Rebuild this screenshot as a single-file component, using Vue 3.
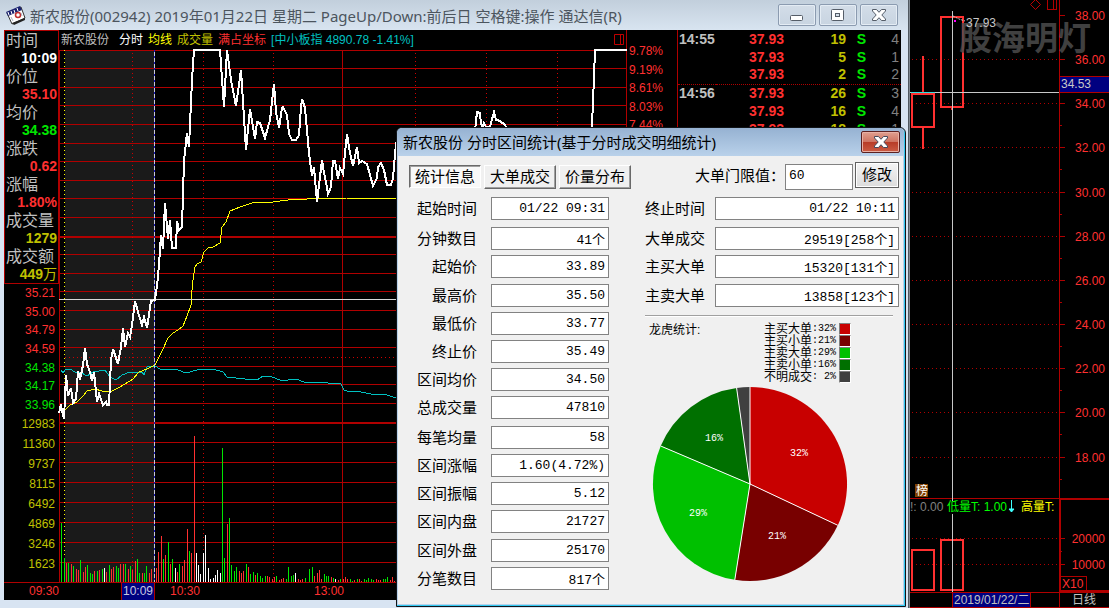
<script setup>
const info = [
  { label: '时间', value: '10:09', tone: 'white' },
  { label: '价位', value: '35.10', tone: 'red' },
  { label: '均价', value: '34.38', tone: 'green' },
  { label: '涨跌', value: '0.62', tone: 'red' },
  { label: '涨幅', value: '1.80%', tone: 'red' },
  { label: '成交量', value: '1279', tone: 'yellow' },
  { label: '成交额', value: '449', unit: '万', tone: 'yellow' }
]
const priceAxis = [
  ['35.21', 'red'], ['35.00', 'red'], ['34.79', 'red'], ['34.59', 'red'],
  ['34.38', 'green'], ['34.17', 'green'], ['33.96', 'green']
]
const volumeAxis = ['12983', '11360', '9737', '8115', '6492', '4869', '3246', '1623']
const percentAxis = ['9.78%', '9.19%', '8.61%', '8.03%', '7.44%']

const ticks = [
  ['14:55', '37.93', 19, 4], ['', '37.93', 5, 1], ['', '37.93', 2, 2],
  ['14:56', '37.93', 26, 3], ['', '37.93', 16, 4], ['', '37.93', 18, 1]
]

const gridY = [50, 68, 87, 105, 124, 143, 161, 180, 198, 217, 254, 273, 291, 310, 329, 347, 366, 384, 403, 442, 462, 482, 502, 522, 542, 562]
const dottedX = [132, 203, 273, 415, 486, 557]

const pricePath = '59,413 61,404 62,411 64,419 66,375 68,396 71,388 73,403 76,399 78,371 80,380 83,365 85,348 87,364 90,372 92,381 94,372 97,402 99,394 103,405 106,402 107,405 109,405 111,360 113,349 118,364 121,347 123,328 125,347 128,333 130,337 132,325 135,301 138,312 142,325 144,317 147,328 149,315 151,301 155,300 157,286 159,265 161,235 163,249 165,203 168,239 170,220 172,248 176,248 177,221 179,230 182,227 184,161 186,142 187,133 189,147 192,80 194,50 220,50 224,107 227,50 231,80 236,106 241,70 246,150 250,109 255,139 257,122 260,123 265,138 270,120 274,84 276,112 279,128 282,108 283,107 287,115 289,134 292,140 296,140 299,135 301,107 302,99 305,108 309,153 312,176 314,167 317,202 322,160 324,173 326,182 328,194 331,187 333,161 335,161 338,179 340,168 343,174 345,153 347,134 350,153 353,166 357,147 359,163 362,161 367,164 370,175 373,186 377,178 378,167 381,163 384,170 387,185 391,185 393,178 396,143 410,150 430,138 450,150 474,140 477,112 480,113 481,124 483,127 484,123 486,127 490,127 494,112 496,120 498,120 504,124 515,140 560,150 588,145 592,126 594,77 595,50 627,50'
const averagePath = '64,411 70,405 77,402 83,396 87,391 95,389 102,391 110,392 118,388 125,384 133,379 139,372 147,369 155,365 158,359 163,349 168,338 173,333 178,330 183,326 187,316 191,305 192,290 193,280 195,267 197,264 201,262 204,252 208,248 213,247 220,243 222,227 226,222 230,211 240,207 252,203 273,202 288,200 307,199 347,198 396,198'
const indexPath = '61,370 63,373 66,369 70,369 75,372 80,372 87,376 93,372 105,370 110,377 116,380 122,375 130,372 142,372 144,375 147,367 155,366 160,369 168,369 178,370 186,373 197,370 213,369 223,372 227,377 245,379 257,380 263,376 272,377 280,380 288,380 296,379 304,382 316,382 328,383 341,384 344,390 350,392 356,391 366,393 376,395 384,394 396,398'

// x, top, colour key — bars stand on the time axis
const volumeBars = 'g61,523 g64,558 r66,563 g68,563 r71,564 g73,566 r76,569 r78,570 g80,560 r83,572 r85,567 g87,565 g90,573 g92,574 r94,571 g97,571 r99,570 g102,569 w104,568 r106,572 g109,565 r111,569 r113,567 g116,566 g118,568 r120,564 r123,564 g125,564 r128,569 g130,566 r132,570 r135,561 g137,559 g139,573 r142,573 g144,573 g146,566 r149,573 r151,569 m154,565 r156,568 r158,552 r161,536 g163,559 r165,555 g168,542 r170,564 g172,559 w175,568 r177,572 g179,564 r182,566 r184,560 r187,529 g189,551 r191,553 r194,436 w196,553 w198,565 w200,574 w203,553 w205,535 w208,568 w210,579 w213,578 w215,575 w217,570 w220,573 g222,448 g224,558 r227,524 g229,518 g231,565 g234,571 g236,567 r239,571 r241,573 r243,571 g246,564 r248,567 g250,574 g253,572 r255,575 g257,573 g260,576 g262,578 g265,576 r267,576 r269,577 r272,579 r274,577 g276,576 r279,580 r281,579 r283,578 g286,579 g288,567 g291,576 g293,575 w295,573 r298,579 r300,580 r302,579 g305,578 g309,569 g312,567 r314,576 r317,573 r319,570 r321,579 g324,574 g326,576 g328,576 r331,577 g333,578 w335,579 r338,580 g340,579 r343,579 r345,577 r347,579 g350,579 g352,581 r354,580 g357,579 r359,579 r361,581 g364,579 g366,580 g368,578 g371,579 g373,580 r376,579 r378,580 r380,580 g383,579 g385,579 g387,577 r390,580 r392,577 r394,581'
  .split(' ').map(s => {
    const [x, y] = s.slice(1).split(',').map(Number)
    return { x, y, tone: s[0] }
  })

const leftRows = [
  ['起始时间', '01/22 09:31'], ['分钟数目', '41个'], ['起始价', '33.89'], ['最高价', '35.50'],
  ['最低价', '33.77'], ['终止价', '35.49'], ['区间均价', '34.50'], ['总成交量', '47810'],
  ['每笔均量', '58'], ['区间涨幅', '1.60(4.72%)'], ['区间振幅', '5.12'], ['区间内盘', '21727'],
  ['区间外盘', '25170'], ['分笔数目', '817个']
]
const rightRows = [
  ['终止时间', '01/22 10:11'], ['大单成交', '29519[258个]'], ['主买大单', '15320[131个]'], ['主卖大单', '13858[123个]']
]
const legend = [
  { name: '主买大单', pct: ':32%', color: '#c80000' },
  { name: '主买小单', pct: ':21%', color: '#780000' },
  { name: '主卖大单', pct: ':29%', color: '#00c000' },
  { name: '主卖小单', pct: ':16%', color: '#007000' },
  { name: '不明成交', pct: ': 2%', color: '#404040' }
]
const stops = [0, 0.32, 0.525, 0.814, 0.978, 1]
const at = f => {
  const a = f * 2 * Math.PI
  return `${(98 + 97 * Math.sin(a)).toFixed(1)} ${(98 - 97 * Math.cos(a)).toFixed(1)}`
}
const slices = legend.map((l, i) => ({
  color: l.color,
  d: `M98 98L${at(stops[i])}A97 97 0 0 1 ${at(stops[i + 1])}Z`
}))
const sliceLabels = [
  { x: 147, y: 70, t: '32%' }, { x: 125, y: 153, t: '21%' },
  { x: 46, y: 130, t: '29%' }, { x: 62, y: 55, t: '16%' }
]

const kAxis = [38, 36, 34, 32, 30, 28, 26, 24, 22, 20, 18].map((v, i) => ({
  t: v + '.00',
  y: Math.round(16 + i * 44.15) - 0.5
}))
</script>

<template>
  <div class="desk">
    <section class="window">
      <header class="caption">
        <svg class="app-icon" width="22" height="20" viewBox="0 0 22 20">
          <path d="M2 8L16 2L20 13L7 19Z" fill="#fff" stroke="#333" />
          <path d="M1 7L15 1L17 5L3 11Z" fill="#1c2470" />
          <path d="M3 7l1 3M6 6l1 3M9 5l1 3M12 3l1 3" stroke="#fff" />
          <path d="M7 18L20 13L20 15L9 20Z" fill="#222" />
          <circle cx="13" cy="10" r="2.5" fill="none" stroke="#c03030" stroke-width="1.5" />
          <path d="M6 12l2 4M16 8l1 3" stroke="#a9aec0" />
        </svg>
        <h1>新农股份(002942) 2019年01月22日 星期二 PageUp/Down:前后日 空格键:操作 通达信(R)</h1>
        <div class="caption-buttons">
          <button type="button" aria-label="最小化">
            <svg width="14" height="14" viewBox="0 0 14 14"><rect x="0.5" y="7.5" width="12" height="5" rx="1" fill="#fff" stroke="#555d68" /></svg>
          </button>
          <button type="button" aria-label="最大化">
            <svg width="14" height="14" viewBox="0 0 14 14"><rect x="0.5" y="1.5" width="12" height="11" rx="1" fill="#fff" stroke="#555d68" /><rect x="4.5" y="5.5" width="4" height="3" fill="#d4dfea" stroke="#555d68" /></svg>
          </button>
          <button type="button" aria-label="关闭">
            <svg width="14" height="14" viewBox="0 0 14 14"><path d="M.5 1.5h4L7 4.300L9.500 1.500h4v1.500L9.800 7L13.500 11v1.500h-4L7 9.700L4.500 12.500h-4V11L4.200 7L.5 3Z" fill="#fff" stroke="#555d68" /></svg>
          </button>
        </div>
      </header>

      <div class="content">
        <div class="side">
          <dl class="info">
            <div v-for="i in info" :key="i.label">
              <dt>{{ i.label }}</dt>
              <dd :class="i.tone">{{ i.value }}<span v-if="i.unit">{{ i.unit }}</span></dd>
            </div>
          </dl>
          <ul class="axis price-axis"><li v-for="p in priceAxis" :key="p[0]" :class="p[1]">{{ p[0] }}</li></ul>
          <ul class="axis volume-axis"><li v-for="v in volumeAxis" :key="v" class="yellow">{{ v }}</li></ul>
        </div>

        <div class="chart">
          <div class="chart-head">
            <span>新农股份</span><span class="name white">分时</span><span class="bright">均线</span><span class="yellow">成交量</span><span class="red">满占坐标</span><span class="cyan">[中小板指 4890.78 -1.41%]</span>
            <svg class="pane-icon" width="11" height="12" viewBox="0 0 11 12"><path d="M.5.5h9v10h-9zM6.5.5v10" fill="none" stroke="#c00000" /></svg>
          </div>
          <svg class="plot" viewBox="59 50 568 532" preserveAspectRatio="none">
            <rect x="65" y="50" width="90" height="532" fill="#1a1a1a" />
            <g class="crisp" stroke="#b00000" fill="none">
              <path v-for="y in gridY" :key="y" :d="`M59 ${y + 0.5}H627`" />
              <path d="M59 237H627M59 423H627" stroke-width="2" />
              <path v-for="x in dottedX" :key="'x' + x" :d="`M${x + 0.5} 53V582`" stroke="#d00000" stroke-dasharray="1 3" />
              <path d="M65 357.5H627" stroke="#d00000" stroke-dasharray="1 3" />
              <path d="M59.5 50V582M342.5 50V582M626.5 30V582" />
            </g>
            <path class="crisp" d="M64.5 50V582" stroke="#ffff00" stroke-dasharray="1 3" />
            <g class="crisp">
              <rect v-for="b in volumeBars" :key="b.x" :x="b.x" :y="b.y" width="1" :height="582 - b.y" :class="'bar-' + b.tone" />
            </g>
            <g class="crisp" fill="none">
              <polyline :points="indexPath" stroke="#00c0c0" />
              <polyline :points="averagePath" stroke="#ffff00" />
              <path d="M59 299.5H627" stroke="#d8d8d8" />
              <path d="M154.5 50V582" stroke="#c8c8d8" />
              <path d="M154.5 50V582" stroke="#1818c0" stroke-dasharray="2 4" />
              <polyline :points="pricePath" stroke="#ffffff" stroke-width="2" />
            </g>
          </svg>
        </div>

        <ul class="percent"><li v-for="p in percentAxis" :key="p">{{ p }}</li></ul>

        <div class="deals">
          <table>
            <tbody>
              <tr v-for="(t, i) in ticks" :key="i" :class="{ minute: i === 3 }">
                <td class="time">{{ t[0] }}</td>
                <td class="price">{{ t[1] }}</td>
                <td class="vol">{{ t[2] }}</td>
                <td class="side-flag">S</td>
                <td class="count">{{ t[3] }}</td>
              </tr>
            </tbody>
          </table>
        </div>

        <div class="times">
          <span>09:30</span><span class="cursor-cell"><b>10:09</b></span><span>10:30</span><span>13:00</span>
        </div>
      </div>
    </section>

    <aside class="kline">
      <svg class="kchart" viewBox="910 0 199 592" preserveAspectRatio="xMaxYMin slice">
        <g class="crisp" stroke="#b00000" fill="none">
          <path v-for="k in kAxis.slice(1)" :key="k.t" :d="`M912 ${k.y}H1059`" stroke-dasharray="1 3" />
          <path d="M912 538.5H1059M912 564.5H1059" stroke-dasharray="1 3" />
          <path v-for="k in kAxis" :key="'t' + k.t" :d="`M1059 ${k.y}h6M1059 ${k.y + 22}h3`" />
          <path d="M1059.5 0V499M910 498.5H1060M1059 538.5h6M1059 551.5h3M1059 564.5h6" />
          <path d="M1109 499H1060V591H1109" stroke-width="2" />
          <path d="M1061 576.5h25V591" />
          <path d="M1047.5 -.5h9v10h-9zM1053.5 0v9" />
        </g>
        <path d="M1035.5 -.5l5 5l-5 5l-5 -5z" stroke="#c00000" fill="none" />
        <g stroke="#ff3030" stroke-width="2" fill="none">
          <path d="M912 94H934V127H912ZM923 56V93M923 128V149M941 17H963V107H941ZM952 107V110M912 550H934V590H912ZM941 540H963V590H941Z" />
        </g>
        <text x="959" y="50" class="wm">股海明灯</text>
        <path d="M952.5 11V592M910 92.5H1059" stroke="#c8c8c8" fill="none" />
        <path d="M911 92.5H935" stroke="#30e0e0" />
        <path d="M953 16l6 3l6 2" stroke="#c8c8c8" stroke-dasharray="2 1" fill="none" />
        <rect x="954" y="20" width="2" height="2" fill="#ff00ff" />
        <text x="966" y="27" class="t-light">37.93</text>
        <g class="t-red">
          <text v-for="k in kAxis" :key="'l' + k.t" x="1105" :y="k.y + 4.5" text-anchor="end">{{ k.t }}</text>
          <text x="1105" y="543" text-anchor="end">20000</text>
          <text x="1105" y="569" text-anchor="end">10000</text>
          <text x="1062" y="588">X10</text>
        </g>
        <rect x="1060" y="77" width="49" height="15" fill="#000080" />
        <path d="M1060 76.5H1109M1060 92.5H1109" stroke="#b00000" />
        <text x="1061" y="88" class="t-light">34.53</text>
        <rect x="915" y="484" width="13" height="13" fill="#804000" />
        <text x="916" y="495" class="t-white">榜</text>
        <rect x="947" y="501" width="22" height="13" fill="#000" />
        <text x="910" y="511" class="t-dim">!: 0.00</text>
        <text x="947" y="511" class="t-green">低量T: 1.00</text>
        <path d="M1011.5 500v12M1009 509l2.5 3l2.5 -3z" stroke="#40ffff" fill="#40ffff" />
        <text x="1021" y="511" class="t-yellow">高量T:</text>
      </svg>
      <footer class="kfoot"><span class="date">2019/01/22/二</span><span class="period">日线</span></footer>
    </aside>

    <section class="dialog" role="dialog" aria-label="分时区间统计">
      <header class="dialog-title">
        <h2>新农股份 分时区间统计(基于分时成交明细统计)</h2>
        <button type="button" class="close" aria-label="关闭">
          <svg width="14" height="14" viewBox="0 0 14 14"><path d="M.5 1.5h4L7 4.300L9.500 1.500h4v1.500L9.800 7L13.500 11v1.500h-4L7 9.700L4.500 12.500h-4V11L4.200 7L.5 3Z" fill="#fff" stroke="#444a5c" /></svg>
        </button>
      </header>
      <div class="dialog-body">
        <div class="toolbar">
          <div class="tabs">
            <button type="button" class="active">统计信息</button>
            <button type="button">大单成交</button>
            <button type="button">价量分布</button>
          </div>
          <label for="limit">大单门限值：</label>
          <input id="limit" class="limit" value="60">
          <button type="button" class="modify">修改</button>
        </div>
        <div class="columns">
          <div class="rows left">
            <div v-for="(r, i) in leftRows" :key="r[0]" class="row">
              <label :for="'l' + i">{{ r[0] }}</label>
              <input :id="'l' + i" :value="r[1]" readonly>
            </div>
          </div>
          <div class="right">
            <div class="rows">
              <div v-for="(r, i) in rightRows" :key="r[0]" class="row">
                <label :for="'r' + i">{{ r[0] }}</label>
                <input :id="'r' + i" :value="r[1]" readonly>
              </div>
            </div>
            <hr>
            <div class="breakdown">
              <span>龙虎统计:</span>
              <ul class="legend">
                <li v-for="l in legend" :key="l.name">{{ l.name }}<span class="num">{{ l.pct }}</span><i :style="{ background: l.color }"></i></li>
              </ul>
            </div>
            <svg class="pie" width="196" height="196" viewBox="0 0 196 196">
              <path v-for="s in slices" :key="s.d" :d="s.d" :fill="s.color" />
              <path v-for="f in stops.slice(0, 5)" :key="f" :d="`M98 98L${at(f)}`" stroke="#fff" />
              <text v-for="l in sliceLabels" :key="l.t" :x="l.x" :y="l.y" text-anchor="middle">{{ l.t }}</text>
            </svg>
          </div>
        </div>
      </div>
    </section>
  </div>
</template>

<style>
body {
  background: #000;
}
</style>

<style scoped>
* {
  box-sizing: border-box;
}
.desk {
  position: relative;
  display: flex;
  height: 100vh;
  overflow: hidden;
  font: 12px/18px "Liberation Sans", "Noto Sans CJK SC", sans-serif;
  color: #c0c0c0;
}
ul, dl, dd, h1, h2 {
  margin: 0;
  padding: 0;
  list-style: none;
  font-weight: normal;
}
button, input {
  font: inherit;
  padding: 0;
  margin: 0;
}
.crisp { shape-rendering: crispEdges; }
.red { color: #ff3030; }
.green { color: #00e600; }
.yellow { color: #c0c000; }
.bright { color: #ffff00; }
.white { color: #ffffff; }
.cyan { color: #00c0c0; }

/* main window */
.window {
  flex: 1;
  min-width: 0;
  display: flex;
  flex-direction: column;
  padding: 0 7px 8px 4px;
  border-right: 1px solid #505860;
  background: #d8e4f2;
}
.caption {
  display: flex;
  align-items: center;
  height: 30px;
  flex: none;
  margin: 0 -7px 0 -4px;
  padding: 0 10px 0 5px;
  background: linear-gradient(#c2cfdc, #d8e4f0);
}
.app-icon {
  flex: none;
  margin-right: 3px;
}
.caption h1 {
  flex: 1;
  font: 15px/30px "Noto Sans", "Noto Sans CJK SC", sans-serif;
  color: #4c555e;
  white-space: nowrap;
  padding-top: 2px;
}
.caption-buttons {
  display: flex;
  gap: 3px;
}
.caption-buttons button {
  display: flex;
  align-items: center;
  justify-content: center;
  width: 38px;
  height: 22px;
  border: 1px solid #8b9bb0;
  border-radius: 2px;
  background: linear-gradient(#d3dde8, #c8d4e1);
  box-shadow: inset 0 0 0 1px #e4ecf4;
}
.content {
  flex: 1;
  min-height: 0;
  display: grid;
  grid-template: 1fr 18px / 55px 1fr 50px 224px;
  background: #000;
}
.side {
  display: flex;
  flex-direction: column;
  min-height: 0;
}
.info {
  border: 1px solid #b00000;
}
.info div {
  height: 36px;
}
.info dt {
  height: 19px;
  font-size: 16px;
  line-height: 19px;
  padding-left: 1px;
  white-space: nowrap;
}
.info dd {
  height: 17px;
  font-size: 14px;
  font-weight: bold;
  line-height: 17px;
  text-align: right;
  padding-right: 1px;
}
.info dd span {
  font-weight: normal;
}
.axis {
  display: flex;
  flex-direction: column;
  text-align: right;
  padding-right: 4px;
}
.axis li {
  flex: 1;
  display: flex;
  align-items: center;
  justify-content: flex-end;
  line-height: 14px;
}
.price-axis {
  height: 130px;
}
.volume-axis {
  height: 160px;
}
.chart {
  min-width: 0;
  display: flex;
  flex-direction: column;
}
.chart-head {
  display: flex;
  gap: 5px;
  height: 20px;
  line-height: 20px;
  padding-left: 2px;
  white-space: nowrap;
}
.chart-head .name {
  margin-left: 5px;
}
.pane-icon {
  margin: 4px 2px 0 auto;
}
.plot {
  flex: 1;
  min-height: 0;
  width: 100%;
  overflow: visible;
}
.bar-r { fill: #ff3030; }
.bar-g { fill: #00e600; }
.bar-w { fill: #ffffff; }
.bar-m { fill: #c000ff; }
.percent {
  display: grid;
  grid-auto-rows: 1fr;
  height: 93px;
  margin-top: 12px;
  padding-left: 2px;
  color: #ff3030;
}
.deals {
  border-left: 1px solid #b00000;
  min-width: 0;
  overflow: hidden;
}
.deals table {
  width: 100%;
  border-collapse: collapse;
  table-layout: fixed;
  font-size: 14px;
  font-weight: bold;
  line-height: 17px;
}
.deals tr {
  height: 18px;
}
.deals td {
  padding: 0;
  text-align: right;
}
.deals .minute td {
  border-top: 1px dotted #b00000;
}
.deals .time {
  width: 38px;
  text-align: left;
  padding-left: 1px;
}
.deals .price { width: 68px; color: #ff3030; }
.deals .vol { width: 62px; color: #c0c000; }
.deals .side-flag { width: 20px; color: #00e600; }
.deals .count { color: #808080; font-weight: normal; padding-right: 2px; }
.times {
  grid-column: 1 / -1;
  display: grid;
  grid-template-columns: 55px 96px 45px 144px;
  border-top: 1px solid #b00000;
  line-height: 16px;
  text-align: right;
  color: #ff3030;
}
.cursor-cell {
  display: flex;
  justify-content: flex-end;
}
.cursor-cell b {
  padding: 0 1px;
  background: #000080;
  border: solid #b00000;
  border-width: 0 1px;
  color: #c8c8e0;
  font-weight: normal;
}

/* daily chart */
.kline {
  flex: none;
  width: 200px;
  display: flex;
  flex-direction: column;
  background: #000;
  border-left: 1px solid #808890;
}
.kchart {
  flex: 1;
  min-height: 0;
  width: 100%;
}
.wm {
  font: bold 33px "Noto Sans CJK SC", sans-serif;
  fill: #4c4c4c;
  opacity: 0.85;
}
.t-light { fill: #c8c8c8; }
.t-red { fill: #ff3030; }
.t-white { fill: #ffffff; }
.t-dim { fill: #808080; }
.t-green { fill: #00ff00; }
.t-yellow { fill: #ffff00; }
.kfoot {
  flex: none;
  display: flex;
  justify-content: space-between;
  height: 16px;
  line-height: 14px;
  padding-left: 42px;
  border: solid #b00000;
  border-width: 1px 0;
}
.date {
  padding: 0 1px;
  background: #000080;
  border: solid #b00000;
  border-width: 0 1px;
  white-space: nowrap;
}
.period {
  width: 50px;
  padding-left: 12px;
  border-left: 1px solid #b00000;
}

/* statistics dialog */
.dialog {
  position: absolute;
  left: 396px;
  top: 127px;
  width: 510px;
  display: flex;
  flex-direction: column;
  border: 1px solid #101418;
  border-radius: 6px 6px 0 0;
  background: #b9d1ea;
  box-shadow: inset -1px -1px 0 #30c8f0;
  padding: 0 2px 2px 1px;
  color: #000;
  font-size: 15px;
}
.dialog-title {
  display: flex;
  align-items: center;
  height: 28px;
  margin: 0 -1px;
  padding: 0 4px 0 6px;
  border-radius: 5px 5px 0 0;
  background: linear-gradient(#96b2d2, #b9d1ea);
}
.dialog-title h2 {
  flex: 1;
  font: 15px/28px "Noto Sans", "Noto Sans CJK SC", sans-serif;
  white-space: nowrap;
}
.close {
  display: flex;
  align-items: center;
  justify-content: center;
  width: 39px;
  height: 22px;
  border: 1px solid #5c2020;
  border-radius: 2px;
  background: linear-gradient(#e0a090, #cf7462 48%, #b83c28 52%, #cc5c44);
  box-shadow: inset 0 0 0 1px #e8b0a4;
}
.dialog-body {
  flex: 1;
  background: #f0f0f0;
  padding: 6px 4px 14px 11px;
}
.toolbar {
  display: flex;
  align-items: flex-start;
  height: 35px;
  line-height: 20px;
}
.tabs {
  display: flex;
  gap: 3px;
  margin: 3px auto 0 0;
}
.tabs button {
  width: 72px;
  height: 24px;
  line-height: 20px;
  background: #f0f0f0;
  border: 1px solid;
  border-color: #fff #696969 #696969 #fff;
  box-shadow: inset -1px -1px 0 #a0a0a0;
  color: #000;
}
.tabs .active {
  height: 23px;
  background: #f8f8f8;
  border-color: #696969 #fff #fff #696969;
  box-shadow: inset 1px 1px 0 #a0a0a0;
}
.toolbar label {
  padding-top: 4px;
}
input {
  height: 23px;
  border: 1px solid #828282;
  border-radius: 0;
  background: #fff;
  color: #000;
  font: 13px "Liberation Mono", "Noto Sans CJK SC", monospace;
  text-align: right;
  padding: 0 3px;
  min-width: 0;
}
.toolbar .limit {
  width: 68px;
  height: 26px;
  margin: 2px 2px 0 0;
  padding-bottom: 3px;
  text-align: left;
}
.modify {
  width: 44px;
  height: 26px;
  border: 1px solid #606060;
  background: linear-gradient(#f4f4f4, #dcdcdc);
  box-shadow: inset 0 0 0 1px #fff;
  color: #000;
}
.columns {
  display: grid;
  grid-template-columns: 200px 1fr;
  gap: 36px;
}
.rows {
  display: flex;
  flex-direction: column;
  gap: 5px;
}
.row {
  display: flex;
  align-items: center;
  gap: 10px;
  height: 23px;
}
.row:nth-child(2), .row:nth-child(9) {
  margin-top: 2px;
}
.row:nth-child(4), .row:nth-child(13) {
  margin-top: 1px;
}
.row label {
  width: 60px;
  text-align: right;
}
.row input {
  flex: 1;
}
.left .row {
  gap: 14px;
  padding-left: 8px;
}
.right hr {
  margin: 8px 6px 6px 0;
  border: solid;
  border-width: 1px 0;
  border-color: #a0a0a0 #fff #fff;
}
.breakdown {
  display: flex;
  justify-content: space-between;
  padding: 0 48px 0 4px;
  font-size: 12px;
  line-height: 14px;
}
.legend li {
  display: flex;
  align-items: center;
  height: 12px;
  line-height: 12px;
}
.legend .num {
  font: 10px/12px "Liberation Mono", monospace;
  white-space: pre;
}
.legend i {
  width: 12px;
  height: 12px;
  margin-left: 3px;
  border: 1px solid;
  border-color: #808080 #fff #fff #808080;
}
.pie {
  display: block;
  margin: 3px 0 0 7px;
}
.pie text {
  font: 10px "Liberation Mono", monospace;
  fill: #fff;
}
</style>
